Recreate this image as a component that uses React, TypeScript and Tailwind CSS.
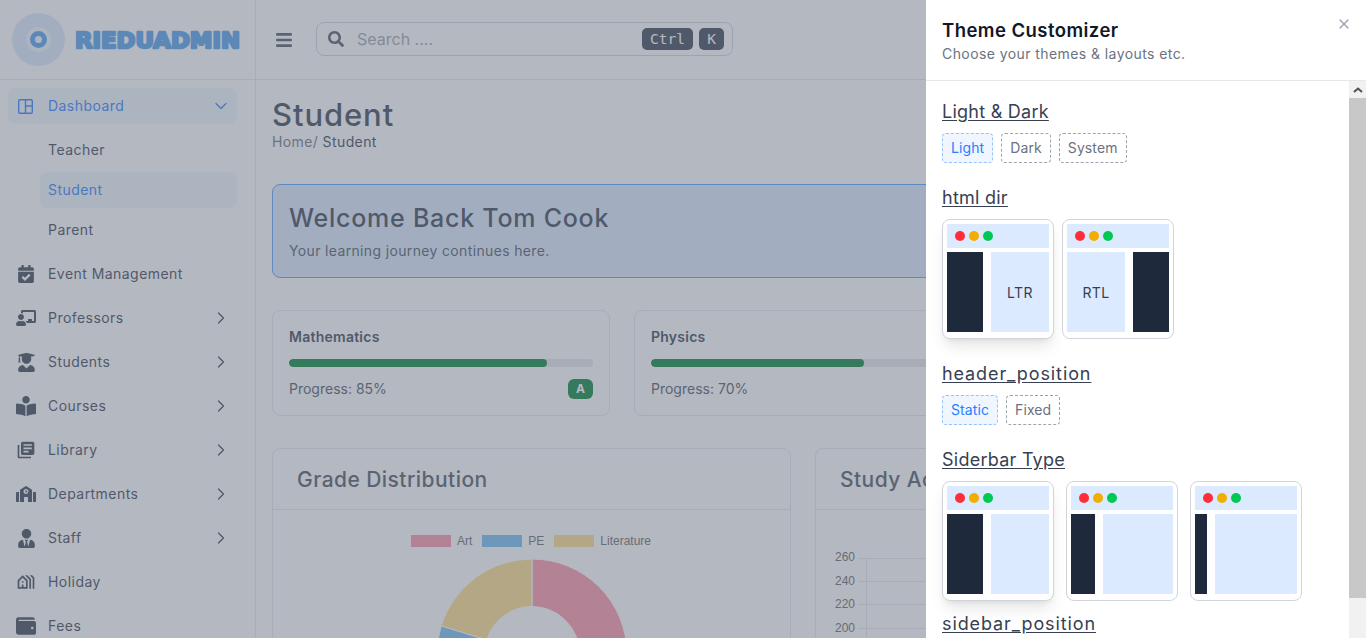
import React from "react";
import { ChevronDown, ChevronRight, X } from "lucide-react";
import {
  FaCalendarCheck,
  FaChalkboardTeacher,
  FaUserGraduate,
  FaBookReader,
  FaSchool,
  FaUserTie,
  FaWallet,
  FaSearch,
  FaBars,
} from "react-icons/fa";
import { MdLibraryBooks, MdOutlineHolidayVillage } from "react-icons/md";

function Logo() {
  return (
    <div className="flex items-center gap-[10px] pl-3 h-[80px] border-b border-[#e5e7eb]">
      <div className="w-[53px] h-[53px] rounded-full bg-[#dbeafe] flex items-center justify-center">
        <div className="w-[25px] h-[25px] rounded-full bg-[#eff6ff] flex items-center justify-center">
          <div className="w-[17px] h-[17px] rounded-full border-[5px] border-[#4f9fee]" />
        </div>
      </div>
      <svg width="170" height="30" viewBox="0 0 170 30" className="block">
        <text
          x="0"
          y="23"
          fontFamily="'DejaVu Sans', sans-serif"
          fontWeight="700"
          fontSize="22"
          textLength="165"
          lengthAdjust="spacingAndGlyphs"
          fill="#4f9fee"
          stroke="#4f9fee"
          strokeWidth="2.4"
          strokeLinejoin="round"
        >
          RIEDUADMIN
        </text>
      </svg>
    </div>
  );
}

function DashIcon() {
  return (
    <svg width="15" height="15" viewBox="0 0 15 15" fill="none" stroke="currentColor" strokeWidth="1.4">
      <rect x="0.7" y="0.7" width="13.6" height="13.6" rx="1.2" />
      <path d="M7.5 0.7V14.3M7.5 7H14.3" />
    </svg>
  );
}

type NavItem = { label: string; icon: React.ReactNode; arrow?: boolean };
const items: NavItem[] = [
  { label: "Event Management", icon: <FaCalendarCheck size={18} /> },
  { label: "Professors", icon: <FaChalkboardTeacher size={20} />, arrow: true },
  { label: "Students", icon: <FaUserGraduate size={19} />, arrow: true },
  { label: "Courses", icon: <FaBookReader size={20} />, arrow: true },
  { label: "Library", icon: <MdLibraryBooks size={20} />, arrow: true },
  { label: "Departments", icon: <FaSchool size={20} />, arrow: true },
  { label: "Staff", icon: <FaUserTie size={19} />, arrow: true },
  { label: "Holiday", icon: <MdOutlineHolidayVillage size={20} /> },
  { label: "Fees", icon: <FaWallet size={20} /> },
];

function Sidebar() {
  return (
    <aside className="w-[256px] shrink-0 border-r border-[#e5e7eb] h-full overflow-hidden">
      <Logo />
      <nav className="pl-2 pr-[18px] pt-2 flex flex-col text-sm tracking-[0.45px] text-[#364153]">
        <div className="h-9 rounded-lg bg-[#eff6ff] flex items-center text-[#2b7fff] pl-[10px] pr-[6px]">
          <DashIcon />
          <span className="ml-[15px] flex-1">Dashboard</span>
          <ChevronDown size={20} strokeWidth={1.5} />
        </div>
        <div className="mt-2 pl-8 flex flex-col gap-1">
          <div className="h-9 flex items-center pl-2">Teacher</div>
          <div className="h-9 flex items-center pl-2 rounded-lg bg-[#eff6ff] text-[#2b7fff]">Student</div>
          <div className="h-9 flex items-center pl-2">Parent</div>
        </div>
        <div className="flex flex-col gap-2 mt-2">
          {items.map((it) => (
            <div key={it.label} className="h-9 flex items-center pl-[8px] pr-[6px]">
              <span className="w-[20px] flex justify-center">{it.icon}</span>
              <span className="ml-[12px] flex-1">{it.label}</span>
              {it.arrow && <ChevronRight size={20} strokeWidth={1.5} />}
            </div>
          ))}
        </div>
      </nav>
    </aside>
  );
}

function Header() {
  return (
    <header className="h-[80px] shrink-0 border-b border-[#e5e7eb] flex items-center pl-[19px]">
      <FaBars size={18} className="text-[#4b5563]" />
      <div className="ml-[23px] w-[417px] h-[34px] rounded-lg border border-[#d1d5db] flex items-center pl-[11px] pr-[8px] -mt-[1px]">
        <FaSearch size={16} className="text-[#4b5563]" />
        <span className="ml-[13px] text-base text-[#9ca3af] flex-1">Search ....</span>
        <kbd className="h-[22px] w-[51px] pt-[1px] rounded-[5px] bg-[#364153] text-white text-[14.5px] flex items-center justify-center font-['DejaVu_Sans_Mono',monospace]">Ctrl</kbd>
        <kbd className="ml-[6px] h-[22px] w-[25px] pt-[1px] rounded-[5px] bg-[#364153] text-white text-[14.5px] flex items-center justify-center font-['DejaVu_Sans_Mono',monospace]">K</kbd>
      </div>
    </header>
  );
}

function SubjectCard({ name, pct, grade }: { name: string; pct: number; grade?: string }) {
  return (
    <div className="h-[106px] rounded-lg border border-[#e5e7eb] px-4 pt-4">
      <div className="text-sm font-semibold tracking-[0.25px] text-[#364153] leading-5">{name}</div>
      <div className="mt-3 h-2 rounded-full bg-[#e5e7eb] overflow-hidden">
        <div className="h-full rounded-full bg-[#008236]" style={{ width: `${pct}%` }} />
      </div>
      <div className="mt-3 flex items-center justify-between">
        <span className="text-sm text-[#4b5563]">Progress: {pct}%</span>
        <span className="w-[25px] h-5 rounded-md bg-[#008236] text-white text-xs font-bold flex items-center justify-center">{grade}</span>
      </div>
    </div>
  );
}

const ART = "#ff92a9";
const PE = "#72bef1";
const LIT = "#ffdd89";

function Donut() {
  return (
    <svg width="200" height="130" viewBox="0 0 200 130" className="block">
      <path d="M100 0 A95 95 0 0 1 195 95 L147.5 95 A47.5 47.5 0 0 0 100 47.5 Z" fill={ART} stroke="#fff" />
      <path d="M100 0 A95 95 0 0 0 9.2 67 L54.6 81 A47.5 47.5 0 0 1 100 47.5 Z" fill={LIT} stroke="#fff" />
      <path d="M9.2 67 A95 95 0 0 0 5 95 L52.5 95 A47.5 47.5 0 0 1 54.6 81 Z" fill={PE} stroke="#fff" />
    </svg>
  );
}

function LineAxes() {
  const rows = [
    { v: 260, y: 8, line: 10 },
    { v: 240, y: 32, line: 33 },
    { v: 220, y: 55, line: 56 },
    { v: 200, y: 79, line: 80 },
  ];
  return (
    <svg width="400" height="100" viewBox="0 0 400 100" className="block ml-[19px] mt-[38px]">
      <line x1="31.5" y1="10" x2="31.5" y2="100" stroke="#e5e7eb" />
      {rows.map((r) => (
        <g key={r.v}>
          <line x1="23" y1={r.line + 0.5} x2="400" y2={r.line + 0.5} stroke="#e5e7eb" />
          <text x="20" y={r.y + 4.5} textAnchor="end" fontSize="12" fill="#666" fontFamily="'Liberation Sans', sans-serif">
            {r.v}
          </text>
        </g>
      ))}
    </svg>
  );
}

function Main() {
  return (
    <div className="flex-1 min-w-0 flex flex-col h-full overflow-hidden">
      <Header />
      <main className="pl-4 pr-[32px] pt-[17px]">
        <h1 className="text-[31px] leading-9 font-medium tracking-[0.9px] text-[#364153]">Student</h1>
        <div className="text-sm leading-5 tracking-[0.4px] text-[#6b7280] -mt-[1px]">Home/ <span className="text-[#364153]">Student</span></div>
        <div className="mt-[32px] h-[94px] rounded-lg border border-[#51a2ff] bg-[#dbeafe] px-4 pt-[17px]">
          <h2 className="text-[25px] leading-8 font-medium tracking-[0.75px] text-[#364153]">Welcome Back Tom Cook</h2>
          <p className="text-sm leading-5 mt-[7px] tracking-[0.35px] text-[#4b5563]">Your learning journey continues here.</p>
        </div>
        <div className="mt-8 grid grid-cols-2 gap-6 w-[700px]">
          <SubjectCard name="Mathematics" pct={85} grade="A" />
          <SubjectCard name="Physics" pct={70} />
        </div>
        <div className="mt-8 grid grid-cols-2 gap-6">
          <section className="h-[400px] rounded-lg border border-[#e5e7eb]">
            <div className="h-[61px] pt-[1px] border-b border-[#e5e7eb] px-6 flex items-center text-[21px] font-medium tracking-[0.45px] text-[#4b5563]">Grade Distribution</div>
            <div className="flex items-center justify-center gap-[6px] mt-[25px] h-3 text-xs text-[#666] font-['Liberation_Sans',sans-serif] pr-[1px]">
              <span className="w-10 h-3" style={{ background: ART }} /><span>Art</span>
              <span className="ml-[4px] w-10 h-3" style={{ background: PE }} /><span>PE</span>
              <span className="ml-[4px] w-10 h-3" style={{ background: LIT }} /><span>Literature</span>
            </div>
            <div className="flex justify-center mt-[12px]"><Donut /></div>
          </section>
          <section className="h-[400px] rounded-lg border border-[#e5e7eb]">
            <div className="h-[61px] pt-[1px] border-b border-[#e5e7eb] px-6 flex items-center text-[21px] font-medium tracking-[0.45px] text-[#4b5563]">Study Activity</div>
            <LineAxes />
          </section>
        </div>
      </main>
    </div>
  );
}

function Preview({ side, sw, label, selected }: { side: "l" | "r"; sw: number; label?: string; selected?: boolean }) {
  const dark = <div className="bg-[#1e293b] h-full shrink-0" style={{ width: sw }} />;
  const light = (
    <div className="flex-1 h-full bg-[#dbeafe] pt-[1px] flex items-center justify-center text-sm tracking-[0.4px] text-[#374151]">{label}</div>
  );
  return (
    <div className={`w-[112px] h-[120px] rounded-lg border border-[#d1d5db] bg-white p-1 ${selected ? "shadow-lg" : ""}`}>
      <div className="h-6 bg-[#dbeafe] flex items-center gap-1 pl-2">
        <span className="w-[10px] h-[10px] rounded-full bg-[#ff2d37]" />
        <span className="w-[10px] h-[10px] rounded-full bg-[#f2ae00]" />
        <span className="w-[10px] h-[10px] rounded-full bg-[#00c951]" />
      </div>
      <div className="mt-1 h-20 flex gap-2">
        {side === "l" ? dark : light}
        {side === "l" ? light : dark}
      </div>
    </div>
  );
}

function Chip({ label, active }: { label: string; active?: boolean }) {
  return (
    <div className={`h-[30px] px-2 flex items-center rounded border border-dashed text-sm tracking-[0.1px] ${active ? "border-[#93c5fd] bg-[#eff6ff] text-[#2b7fff]" : "border-[#9ca3af] text-[#6b7280]"}`}>
      {label}
    </div>
  );
}

function Title({ children, wide }: { children: React.ReactNode; wide?: boolean }) {
  return (
    <h3 className={`text-lg leading-7 text-[#374151] underline underline-offset-2 ${wide ? "tracking-[0.9px]" : "tracking-[0.25px]"}`}>
      {children}
    </h3>
  );
}

function Drawer() {
  return (
    <div className="absolute inset-y-0 right-0 w-[440px] bg-white flex flex-col">
      <div className="h-[81px] shrink-0 border-b border-[#e5e7eb] pl-4 pr-4 pt-[16px] relative">
        <div className="text-[18.5px] leading-7 font-semibold tracking-[0.45px] text-[#111827]">Theme Customizer</div>
        <div className="text-sm leading-5 tracking-[0.42px] text-[#6b7280]">Choose your themes &amp; layouts etc.</div>
        <X size={16} className="absolute right-[14px] top-[16px] text-[#9ca3af]" />
      </div>
      <div className="flex-1 min-h-0 flex">
        <div className="flex-1 min-w-0 overflow-hidden pl-4 pt-[17px]">
          <Title>Light &amp; Dark</Title>
          <div className="mt-[7px] flex gap-2"><Chip label="Light" active /><Chip label="Dark" /><Chip label="System" /></div>
          <div className="mt-[21px]"><Title>html dir</Title></div>
          <div className="mt-[7px] flex gap-2">
            <Preview side="l" sw={36} label="LTR" selected />
            <Preview side="r" sw={36} label="RTL" />
          </div>
          <div className="mt-[21px]"><Title wide>header_position</Title></div>
          <div className="mt-[7px] flex gap-2"><Chip label="Static" active /><Chip label="Fixed" /></div>
          <div className="mt-[21px]"><Title>Siderbar Type</Title></div>
          <div className="mt-[7px] flex gap-3">
            <Preview side="l" sw={36} selected />
            <Preview side="l" sw={24} />
            <Preview side="l" sw={12} />
          </div>
          <div className="mt-[9px]"><Title wide>sidebar_position</Title></div>
        </div>
        <div className="w-[17px] shrink-0 bg-[#f1f1f1] flex flex-col">
          <div className="h-[17px] flex items-center justify-center">
            <svg width="10" height="6" viewBox="0 0 10 6"><path d="M1 5 L5 1.5 L9 5" fill="none" stroke="#505050" strokeWidth="2" /></svg>
          </div>
          <div className="h-[500px] bg-[#c8c8c8]" />
        </div>
      </div>
    </div>
  );
}

export default function App() {
  return (
    <div className="relative w-full h-[638px] overflow-hidden bg-white font-['Inter','Noto_Sans',sans-serif]">
      <div className="flex h-full">
        <Sidebar />
        <Main />
      </div>
      <div className="absolute inset-0 bg-[#6a7282]/50" />
      <Drawer />
    </div>
  );
}
